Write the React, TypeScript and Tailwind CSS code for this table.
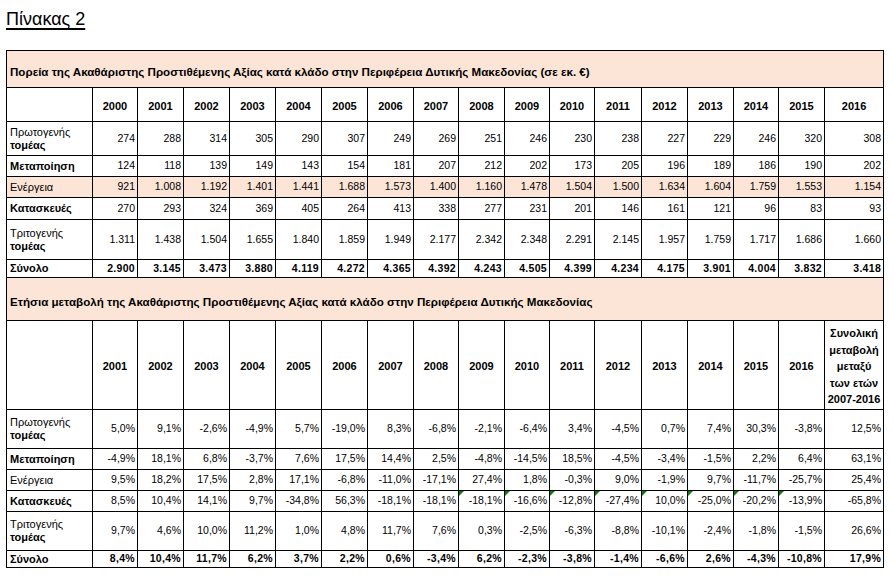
import React from "react";

const colW = [86, 45, 46, 46, 46, 46, 46, 46, 45, 46, 45, 45, 47, 46, 46, 45, 46, 59];

const years1 = ["2000", "2001", "2002", "2003", "2004", "2005", "2006", "2007", "2008", "2009", "2010", "2011", "2012", "2013", "2014", "2015", "2016"];
const years2 = years1.slice(1);

type Row = {
  key: string;
  label: React.ReactNode;
  vals: string[];
  h: string;
  bold?: boolean;
  peach?: boolean;
  flags?: number[];
};

const twoLine = (a: string) => (
  <>
    <span>{a}</span>
    <br />
    <span className="font-bold">τομέας</span>
  </>
);

const rows1: Row[] = [
  { key: "p", label: twoLine("Πρωτογενής"), h: "h-[34px]", vals: ["274", "288", "314", "305", "290", "307", "249", "269", "251", "246", "230", "238", "227", "229", "246", "320", "308"] },
  { key: "m", label: <span className="font-bold">Μεταποίηση</span>, h: "h-[21px]", vals: ["124", "118", "139", "149", "143", "154", "181", "207", "212", "202", "173", "205", "196", "189", "186", "190", "202"] },
  { key: "e", label: "Ενέργεια", h: "h-[21px]", peach: true, vals: ["921", "1.008", "1.192", "1.401", "1.441", "1.688", "1.573", "1.400", "1.160", "1.478", "1.504", "1.500", "1.634", "1.604", "1.759", "1.553", "1.154"] },
  { key: "k", label: <span className="font-bold">Κατασκευές</span>, h: "h-[22px]", vals: ["270", "293", "324", "369", "405", "264", "413", "338", "277", "231", "201", "146", "161", "121", "96", "83", "93"] },
  { key: "t", label: twoLine("Τριτογενής"), h: "h-[40px]", vals: ["1.311", "1.438", "1.504", "1.655", "1.840", "1.859", "1.949", "2.177", "2.342", "2.348", "2.291", "2.145", "1.957", "1.759", "1.717", "1.686", "1.660"] },
  { key: "s", label: "Σύνολο", h: "h-[18px]", bold: true, vals: ["2.900", "3.145", "3.473", "3.880", "4.119", "4.272", "4.365", "4.392", "4.243", "4.505", "4.399", "4.234", "4.175", "3.901", "4.004", "3.832", "3.418"] },
];

const rows2: Row[] = [
  { key: "p2", label: twoLine("Πρωτογενής"), h: "h-[39px]", vals: ["5,0%", "9,1%", "-2,6%", "-4,9%", "5,7%", "-19,0%", "8,3%", "-6,8%", "-2,1%", "-6,4%", "3,4%", "-4,5%", "0,7%", "7,4%", "30,3%", "-3,8%", "12,5%"] },
  { key: "m2", label: <span className="font-bold">Μεταποίηση</span>, h: "h-[21px]", vals: ["-4,9%", "18,1%", "6,8%", "-3,7%", "7,6%", "17,5%", "14,4%", "2,5%", "-4,8%", "-14,5%", "18,5%", "-4,5%", "-3,4%", "-1,5%", "2,2%", "6,4%", "63,1%"] },
  { key: "e2", label: "Ενέργεια", h: "h-[21px]", vals: ["9,5%", "18,2%", "17,5%", "2,8%", "17,1%", "-6,8%", "-11,0%", "-17,1%", "27,4%", "1,8%", "-0,3%", "9,0%", "-1,9%", "9,7%", "-11,7%", "-25,7%", "25,4%"] },
  { key: "k2", label: <span className="font-bold">Κατασκευές</span>, h: "h-[21px]", flags: [8, 9, 10, 11, 12, 13, 14, 15], vals: ["8,5%", "10,4%", "14,1%", "9,7%", "-34,8%", "56,3%", "-18,1%", "-18,1%", "-18,1%", "-16,6%", "-12,8%", "-27,4%", "10,0%", "-25,0%", "-20,2%", "-13,9%", "-65,8%"] },
  { key: "t2", label: twoLine("Τριτογενής"), h: "h-[39px]", vals: ["9,7%", "4,6%", "10,0%", "11,2%", "1,0%", "4,8%", "11,7%", "7,6%", "0,3%", "-2,5%", "-6,3%", "-8,8%", "-10,1%", "-2,4%", "-1,8%", "-1,5%", "26,6%"] },
  { key: "s2", label: "Σύνολο", h: "h-[17px]", bold: true, vals: ["8,4%", "10,4%", "11,7%", "6,2%", "3,7%", "2,2%", "0,6%", "-3,4%", "6,2%", "-2,3%", "-3,8%", "-1,4%", "-6,6%", "2,6%", "-4,3%", "-10,8%", "17,9%"] },
];

const cell = "border border-black p-0 align-middle";

function DataRow({ r }: { r: Row }) {
  return (
    <tr className={`${r.h} ${r.peach ? "bg-[#fce4d6]" : ""}`}>
      <td className={`${cell} pl-[3px] text-[11px] leading-[13px] ${r.bold ? "font-bold" : ""}`}>{r.label}</td>
      {r.vals.map((v, i) => (
        <td
          key={i}
          className={`${cell} relative pr-[2px] text-right text-[10.5px] ${r.bold ? "font-bold tracking-[0.3px]" : ""}`}
        >
          {r.flags?.includes(i) && (
            <span className="absolute left-0 top-0 h-0 w-0 border-t-[5px] border-r-[5px] border-t-[#0a7d0a] border-r-transparent" />
          )}
          {v}
        </td>
      ))}
    </tr>
  );
}

export default function App() {
  return (
    <div className="w-[894px] h-[580px] bg-white pl-[6px] pt-[8px] text-black font-['Liberation_Sans',Arial,sans-serif]">
      <div className="text-[18px] leading-[22px] underline decoration-[1.5px] underline-offset-[3px]">Πίνακας 2</div>
      <table className="mt-[20px] table-fixed border-collapse w-[877px]">
        <colgroup>
          {colW.map((w, i) => (
            <col key={i} style={{ width: w }} />
          ))}
        </colgroup>
        <tbody>
          <tr className="h-[37px] bg-[#fce4d6]">
            <td colSpan={18} className={`${cell} pl-[3px] pt-[5px] text-[11.6px] font-bold`}>
              Πορεία της Ακαθάριστης Προστιθέμενης Αξίας κατά κλάδο στην Περιφέρεια Δυτικής Μακεδονίας (σε εκ. €)
            </td>
          </tr>
          <tr className="h-[34px]">
            <td className={cell} />
            {years1.map((y) => (
              <td key={y} className={`${cell} pt-[3px] text-center text-[11px] font-bold`}>
                {y}
              </td>
            ))}
          </tr>
          {rows1.map((r) => (
            <DataRow key={r.key} r={r} />
          ))}

          <tr className="h-[43px] bg-[#fce4d6]">
            <td colSpan={18} className={`${cell} pl-[3px] pt-[5px] text-[11.6px] font-bold`}>
              Ετήσια μεταβολή της Ακαθάριστης Προστιθέμενης Αξίας κατά κλάδο στην Περιφέρεια Δυτικής Μακεδονίας
            </td>
          </tr>
          <tr className="h-[89px]">
            <td className={cell} />
            {years2.map((y) => (
              <td key={y} className={`${cell} pt-[3px] text-center text-[11px] font-bold`}>
                {y}
              </td>
            ))}
            <td className={`${cell} pt-[3px] text-center text-[11px] leading-[16.5px] font-bold`}>
              Συνολική
              <br />
              μεταβολή
              <br />
              μεταξύ
              <br />
              των ετών
              <br />
              2007-2016
            </td>
          </tr>
          {rows2.map((r) => (
            <DataRow key={r.key} r={r} />
          ))}
        </tbody>
      </table>
    </div>
  );
}
